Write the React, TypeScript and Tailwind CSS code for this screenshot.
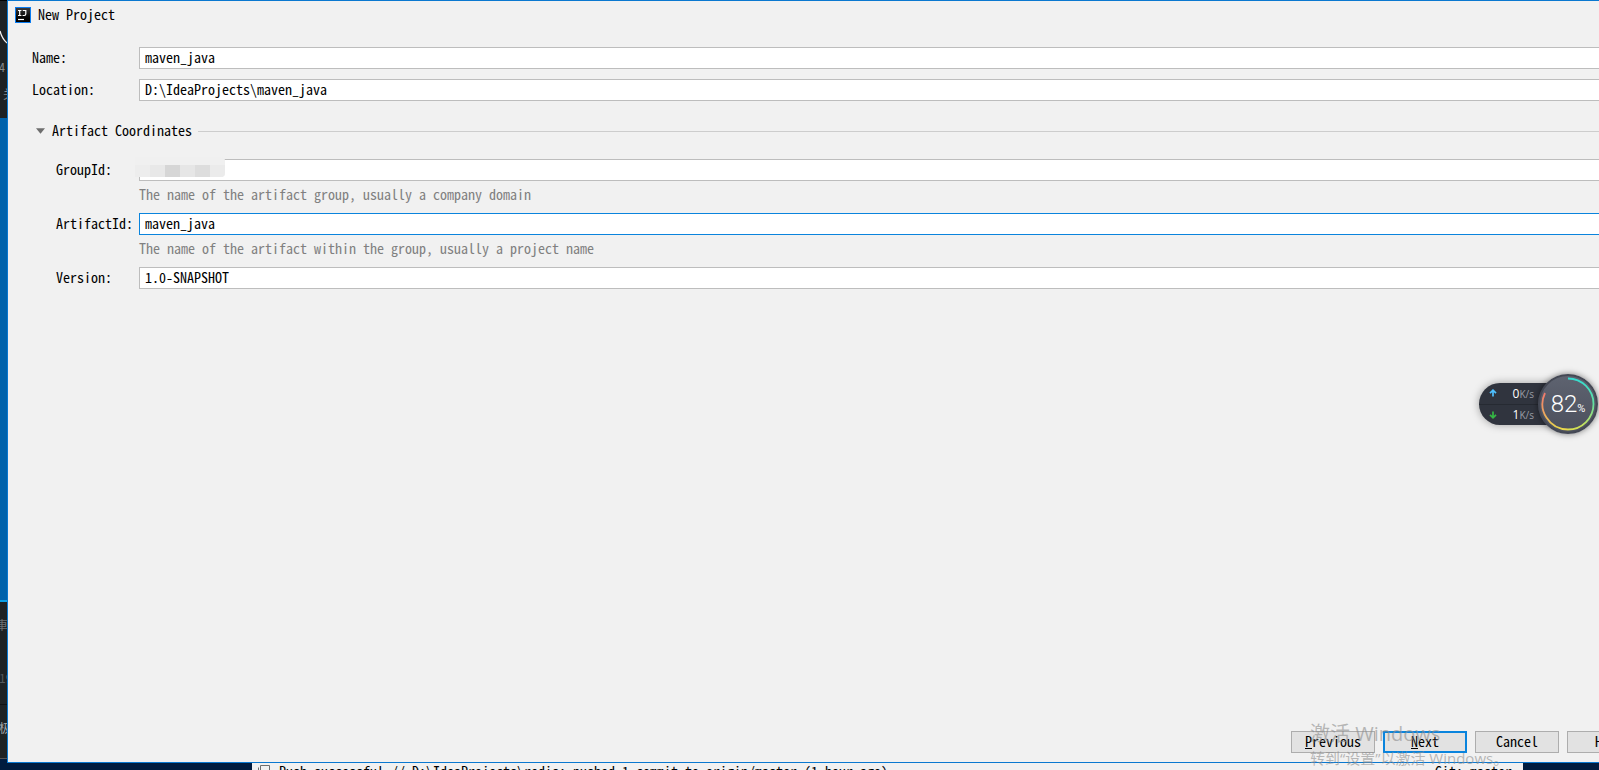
import type { ReactNode } from "react";

const MONO = "font-['Noto_Sans_Mono_CJK_SC','Noto_Sans_Mono_CJK_JP','Liberation_Mono',monospace]";

function IdeaLogo() {
  return (
    <span
      aria-hidden="true"
      className="relative block h-4 w-4 shrink-0 border border-[#0a7cf0] bg-linear-to-b from-[#3a3a3a] to-black"
    >
      <svg viewBox="0 0 14 14" className="block h-full w-full">
        <path d="M2 2.5h3.4M3.7 2.5v5M2 7.5h3.4M6.8 2.5h3v3.6q0 1.4-1.5 1.4H6.6" stroke="#fff" strokeWidth="1.2" fill="none" />
        <path d="M2 11.5h6" stroke="#fff" strokeWidth="1.2" />
      </svg>
    </span>
  );
}

type FieldProps = {
  id: string;
  label: string;
  value?: string;
  focused?: boolean;
  nested?: boolean;
  children?: ReactNode;
};

function Field({ id, label, value = "", focused, nested, children }: FieldProps) {
  return (
    <div className="relative flex h-[22px] items-center">
      <label htmlFor={id} className={nested ? "w-[107px] shrink-0 pb-0.5 pl-6" : "w-[107px] shrink-0 pb-0.5"}>
        {label}
      </label>
      <input
        id={id}
        type="text"
        defaultValue={value}
        className={
          focused
            ? "h-full min-w-0 flex-1 border border-[#0a84dd] bg-white px-[5px] pb-0.5 outline-none"
            : "h-full min-w-0 flex-1 border border-[#bdbdbd] bg-white px-[5px] pb-0.5 outline-none"
        }
      />
      {children}
    </div>
  );
}

function Hint({ children }: { children: ReactNode }) {
  return <p className="flex h-8 items-center pb-1.5 pl-[107px] whitespace-nowrap text-[#808080]">{children}</p>;
}

function Mosaic() {
  return (
    <div aria-hidden="true" className="absolute top-[-2px] left-[103px] flex h-5 w-[90px] overflow-hidden rounded-r-sm bg-[#f0f0f0] pt-2">
      <span className="flex-1 bg-[#ededed]" />
      <span className="flex-1 bg-[#e8e8e8]" />
      <span className="flex-1 bg-[#d6d6d6]" />
      <span className="flex-1 bg-[#e6e6e6]" />
      <span className="flex-1 bg-[#dddddd]" />
      <span className="flex-1 bg-[#ebebeb]" />
    </div>
  );
}

function DialogButton({ children, primary }: { children: ReactNode; primary?: boolean }) {
  return (
    <button
      type="button"
      className={
        primary
          ? "flex h-[22px] w-[84px] items-center justify-center border-2 border-[#0a84dd] bg-[#e2e2e2] pb-0.5"
          : "flex h-[22px] w-[84px] items-center justify-center border border-[#adadad] bg-[#e2e2e2] pb-0.5"
      }
    >
      <span>{children}</span>
    </button>
  );
}

function Arrow({ up }: { up?: boolean }) {
  return (
    <svg viewBox="0 0 8 8" className="h-2 w-2" aria-hidden="true">
      <path
        d={up ? "M4 7.5V1.5M1 4.2L4 1.2L7 4.2" : "M4 .5V6.5M1 3.8L4 6.8L7 3.8"}
        stroke={up ? "#4fc0ff" : "#35b845"}
        strokeWidth="1.7"
        fill="none"
      />
    </svg>
  );
}

function SpeedRow({ up, value }: { up?: boolean; value: string }) {
  return (
    <div className="flex flex-1 items-center pr-[34px] pl-2.5">
      <Arrow up={up} />
      <span className="flex-1 pt-px text-right text-xs text-white">
        {value}
        <span className="text-[10px] text-[#9a9da5]">K/s</span>
      </span>
    </div>
  );
}

function NetworkMonitor() {
  return (
    <div className="absolute top-[374px] right-px flex h-[60px] w-[119px] items-center pr-[30px] font-['Open_Sans',sans-serif]">
      <div className="flex h-[42px] flex-1 flex-col divide-y divide-[#262a32] overflow-hidden rounded-l-full bg-[#30343e] shadow-[0_0_8px_rgba(0,0,0,0.35)]">
        <SpeedRow up value="0" />
        <SpeedRow value="1" />
      </div>
      <div className="absolute top-0 right-0 flex h-[60px] w-[60px] items-center justify-center rounded-full border-2 border-[#444854] bg-linear-to-b from-[#5e6370] to-[#4c505d] shadow-[0_0_6px_rgba(0,0,0,0.5)]">
        <svg viewBox="0 0 56 56" className="absolute h-14 w-14" aria-hidden="true" fill="none" strokeWidth="1.8">
          <defs>
            <linearGradient id="ringRight" x1="0" y1="0" x2="0" y2="1">
              <stop offset="0" stopColor="#35dcd0" />
              <stop offset="0.5" stopColor="#62e0a0" />
              <stop offset="1" stopColor="#d8e050" />
            </linearGradient>
            <linearGradient id="ringLeft" x1="0" y1="0" x2="0" y2="1">
              <stop offset="0" stopColor="#f0786c" />
              <stop offset="0.5" stopColor="#eda060" />
              <stop offset="1" stopColor="#e8d84c" />
            </linearGradient>
          </defs>
          <path d="M28 2.5A25.5 25.5 0 0 1 28 53.5" stroke="url(#ringRight)" />
          <path d="M28 53.5A25.5 25.5 0 0 1 5 17" stroke="url(#ringLeft)" />
        </svg>
        <span className="relative flex items-baseline font-['Roboto',sans-serif] font-light text-white">
          <span className="text-2xl">82</span>
          <span className="text-[11px] font-normal">%</span>
        </span>
      </div>
    </div>
  );
}

function DesktopEdge() {
  return (
    <div aria-hidden="true" className="flex w-[7px] shrink-0 flex-col overflow-hidden bg-[#1e2224] text-xs text-[#85898b]">
      <div className="relative h-[118px] shrink-0 border-t border-black">
        <svg viewBox="0 0 7 16" className="absolute top-[29px] left-0 h-4 w-[7px]">
          <path d="M0 1Q2 9 7 13" stroke="#f2f2f2" strokeWidth="1.3" fill="none" />
        </svg>
        <span className="absolute top-[58px] left-[-1px]">4</span>
        <span className="absolute top-[85px] left-[3px] font-['Noto_Sans_CJK_SC',sans-serif]">关</span>
      </div>
      <div className="flex-1 border-b-2 border-[#0a9fe6] bg-[#0062ab]" />
      <div className="relative h-[157px] shrink-0 border-b border-[#555] font-['Noto_Sans_CJK_SC',sans-serif]">
        <span className="absolute top-[15px] left-[-4px] text-[#6c7072]">車</span>
        <span className="absolute top-[68px] left-[-1px] text-[#55595c]">19</span>
        <div className="absolute top-[102px] h-px w-full bg-[#101214]" />
        <span className="absolute top-[118px] left-[-1px] text-[#a5a8aa]">极</span>
      </div>
      <div className="h-1 shrink-0 bg-[#001c40]" />
    </div>
  );
}

function StatusStrip() {
  return (
    <footer className="flex h-[7px] shrink-0 overflow-hidden bg-[#001c3f] leading-4">
      <div className="mr-[76px] ml-[252px] flex flex-1 items-start justify-between bg-[#f1f1f1] pr-[11px] pl-1.5 whitespace-nowrap">
        <div className="flex items-start gap-[9px]">
          <svg viewBox="0 0 12 12" className="mt-0.5 h-3 w-3" fill="none" stroke="#6e6e6e" aria-hidden="true">
            <path d="M2.5 9.5V.5h9v9zM.5 2.5v9h9" />
          </svg>
          <span>{"Push successful // D:\\IdeaProjects\\redis: pushed 1 commit to origin/master (1 hour ago)"}</span>
        </div>
        <span>Git: master</span>
      </div>
    </footer>
  );
}

export default function App() {
  return (
    <div className={`relative flex h-screen flex-col overflow-hidden bg-[#001c3f] text-[14px] leading-5 text-black ${MONO}`}>
      <div className="flex min-h-0 flex-1">
        <DesktopEdge />
        <main className="-mr-[60px] flex min-w-0 flex-1 flex-col border border-[#0a78d0] bg-[#f1f1f1]">
          <header className="flex h-7 shrink-0 items-center gap-[7px] pl-[7px]">
            <IdeaLogo />
            <h1 className="pb-0.5">New Project</h1>
          </header>
          <form className="flex flex-1 flex-col pt-[18px] pl-6">
            <div className="flex flex-col gap-2.5">
              <Field id="name" label="Name:" value="maven_java" />
              <Field id="location" label="Location:" value={"D:\\IdeaProjects\\maven_java"} />
            </div>
            <fieldset className="mt-5">
              <legend className="flex h-5 w-full items-center">
                <svg viewBox="0 0 10 6" className="mr-[7px] ml-1 h-1.5 w-[9px]" aria-hidden="true">
                  <path d="M0 0h10L5 6z" fill="#6e6e6e" />
                </svg>
                <span className="pb-0.5">Artifact Coordinates</span>
                <span className="ml-1.5 h-px flex-1 bg-[#cdcdcd]" />
              </legend>
              <div className="pt-[18px]">
                <Field id="group" label="GroupId:" nested>
                  <Mosaic />
                </Field>
                <Hint>The name of the artifact group, usually a company domain</Hint>
                <Field id="artifact" label="ArtifactId:" value="maven_java" nested focused />
                <Hint>The name of the artifact within the group, usually a project name</Hint>
                <Field id="version" label="Version:" value="1.0-SNAPSHOT" nested />
              </div>
            </fieldset>
            <div className="mt-auto flex justify-end gap-2 pr-[7px] pb-[9px]">
              <DialogButton>
                <u>P</u>revious
              </DialogButton>
              <DialogButton primary>
                <u>N</u>ext
              </DialogButton>
              <DialogButton>Cancel</DialogButton>
              <DialogButton>Help</DialogButton>
            </div>
          </form>
        </main>
      </div>
      <StatusStrip />
      <NetworkMonitor />
      <div className="pointer-events-none absolute right-0 bottom-0 w-[289px] font-['Open_Sans','Noto_Sans_CJK_SC',sans-serif] whitespace-nowrap text-[#8c8c8c]/60">
        <p className="text-xl leading-6">激活 Windows</p>
        <p className="text-[15px] leading-6">转到“设置”以激活 Windows。</p>
      </div>
    </div>
  );
}
